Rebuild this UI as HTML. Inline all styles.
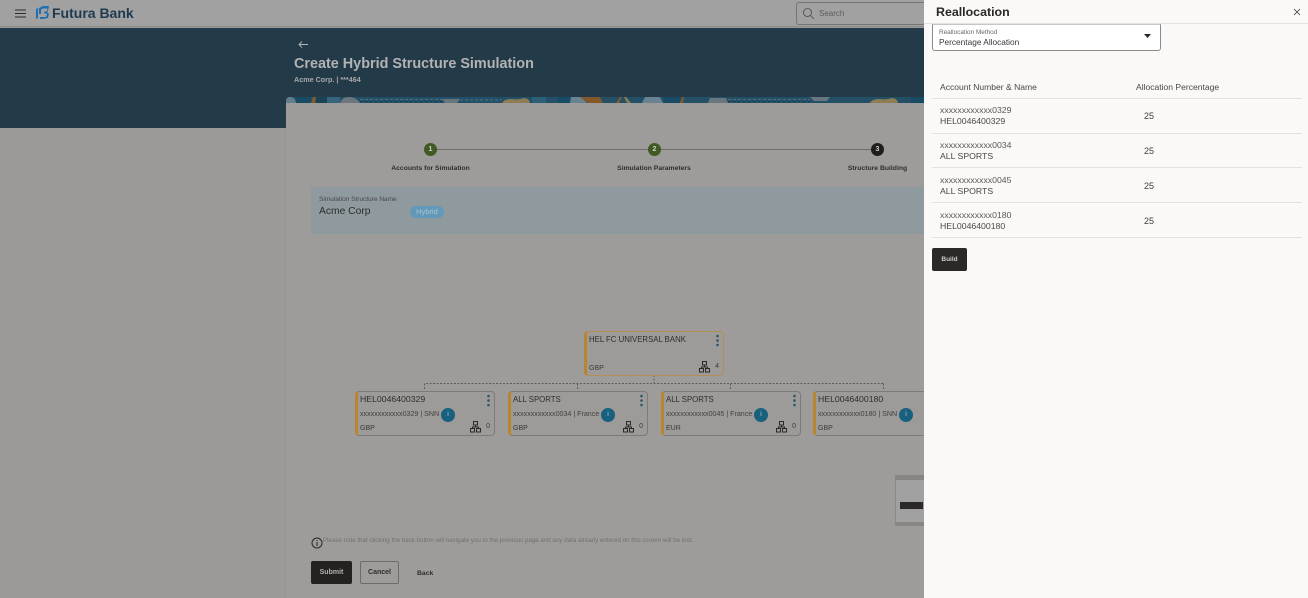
<!DOCTYPE html>
<html lang="en">
<head>
<meta charset="utf-8">
<title>Create Hybrid Structure Simulation</title>
<style>
html,body{margin:0;padding:0}
body{width:1308px;height:598px;overflow:hidden;position:relative;background:#9c9a98;font-family:"Liberation Sans",sans-serif;color:#2a2826}
.a{position:absolute;white-space:nowrap}
.box{position:absolute;box-sizing:border-box}
.step{position:absolute;width:13px;height:13px;border-radius:50%;color:#cfcfc8;font-size:7px;font-weight:bold;line-height:13px;text-align:center}
.lab{position:absolute;top:164px;font-size:6.8px;line-height:10px;font-weight:bold;color:#2f2e2c;white-space:nowrap;transform:translateX(-50%)}
.card{position:absolute;box-sizing:border-box;height:45px;width:140px;border:1px solid #7d7b79;border-left:3px solid #b9852f;border-radius:4px;background:#9d9b99}
.card .t{position:absolute;left:2px;top:1px;font-size:8.7px;line-height:13px;color:#2f2e2d;white-space:nowrap}
.card .t.w{font-size:7.8px}
.card .s{position:absolute;left:2px;top:17px;font-size:7.1px;line-height:11px;color:#444240;white-space:nowrap}
.card .c{position:absolute;left:2px;top:31px;font-size:7px;line-height:11px;color:#3c3a39}
.card .i{position:absolute;top:16px;width:14px;height:14px;border-radius:50%;background:#19607f;color:#b9c5cb;font-size:7px;line-height:14px;text-align:center}
.card .n{position:absolute;right:4px;top:30px;font-size:7px;line-height:10px;color:#3c3a39}
.card svg.org{position:absolute;right:13px;top:29px}
.card svg.dots{position:absolute;right:3px;top:2px}
.row{position:absolute;left:932px;width:370px;box-sizing:border-box;border-bottom:1px solid #e3e2df}
.row .num{position:absolute;left:8px;top:6px;font-size:8.7px;line-height:11px;color:#5a5857}
.row .nm{position:absolute;left:8px;top:17px;font-size:8.7px;line-height:11px;color:#4a4846}
.row .p{position:absolute;left:212px;top:11px;font-size:9px;line-height:12px;color:#3f3d3b}
.row.d .num{top:7px}.row.d .nm{top:18px}.row.d .p{top:12px}
</style>
</head>
<body>
<!-- top bar -->
<div class="box" style="left:0;top:0;width:924px;height:27px;background:#a1a1a1;border-bottom:1px solid #8a8a8a"></div>
<svg class="a" style="left:15px;top:9px" width="11" height="9" viewBox="0 0 11 9"><path d="M0 1h11M0 4.5h11M0 8h11" stroke="#2b2b2b" stroke-width="1.1"/></svg>
<svg class="a" style="left:35px;top:5px" width="15" height="15" viewBox="0 0 15 15"><path d="M1 4 3 3v10l-2 1z" fill="#1f6fb0"/><path d="M4 3 8 1h6l-1 5-1 1 2 2-1 4-5 1H5v-2h6l1-3-3-1v-1l3-1 .5-2.500H8L6 4.500V9H4z" fill="#1f6fb0"/></svg>
<div class="a" style="left:52px;top:4px;font-size:14px;line-height:18px;font-weight:bold;color:#1f3a50">Futura Bank</div>
<div class="box" style="left:796px;top:2px;width:140px;height:23px;border:1px solid #757575;border-radius:3px;background:#a1a1a1"></div>
<svg class="a" style="left:802px;top:7px" width="13" height="13" viewBox="0 0 13 13"><circle cx="5.500" cy="5.500" r="4" fill="none" stroke="#4a4a4a" stroke-width=".8"/><path d="M8.500 8.500 12 12" stroke="#4a4a4a" stroke-width=".8"/></svg>
<div class="a" style="left:819px;top:8px;font-size:8px;line-height:11px;color:#5c5c5c">Search</div>

<!-- blue header -->
<div class="box" style="left:0;top:28px;width:924px;height:100px;background:#233a49"></div>
<svg class="a" style="left:298px;top:40px" width="11" height="9" viewBox="0 0 11 9"><path d="M10 4.500H1M4 1.500 1 4.500l3 3" fill="none" stroke="#b5b5b5" stroke-width=".9"/></svg>
<div class="a" style="left:294px;top:55px;font-size:14.4px;line-height:18px;font-weight:bold;color:#b3b3b3">Create Hybrid Structure Simulation</div>
<div class="a" style="left:294px;top:75px;font-size:7.2px;line-height:10px;font-weight:bold;color:#a9a9a9">Acme Corp. | ***464</div>

<!-- pattern strip -->
<svg class="a" style="left:286px;top:97px;opacity:.8" width="638" height="6" viewBox="0 0 638 6">
<path d="M0 6V4Q0 0 4 0H638V6z" fill="#24566e"/>
<path d="M0 6V4Q0 0 4 0q5 0 6 6z" fill="#76909f"/>
<rect x="10" width="15" height="6" fill="#15506b"/>
<path d="M25 6 27 0h3l-1 6z" fill="#9c6122"/>
<rect x="30" width="11" height="6" fill="#1a4459"/>
<rect x="41" width="13" height="6" fill="#3d7189"/>
<path d="M54 6q2-6 9-6t11 6z" fill="#7e868d"/>
<path d="M74 2.500h82" stroke="#5d7f8f" stroke-width="1" stroke-dasharray="3 2"/>
<path d="M74 4.500h82" stroke="#173d50" stroke-width="1" stroke-dasharray="2 3"/>
<path d="M156 2h18l-3 4h-12z" fill="#7a858d"/>
<path d="M174 3h42" stroke="#5d7f8f" stroke-width="1" stroke-dasharray="3 2"/>
<path d="M216 6q2-4 9-4 8 1 13-1 5 0 6 5z" fill="#a98d57"/>
<rect x="246" width="14" height="6" fill="#2f6a84"/>
<rect x="272" width="12" height="6" fill="#15506b"/>
<path d="M284 6l1-6h10l6 6z" fill="#7a95a5"/>
<path d="M294 0h20l3 6h-15z" fill="#9c6122"/>
<path d="M330 6l4-6h2l-3 6z" fill="#9c6122"/>
<path d="M338 0h2l5 6h-4z" fill="#a98d57"/>
<path d="M356 6l3-6h15l3 6z" fill="#7a95a5"/>
<rect x="378" width="16" height="6" fill="#15506b"/>
<path d="M394 6l2-6h2l-1 6z" fill="#9c6122"/>
<path d="M422 6l2-5h16l2 5z" fill="#7e868d"/>
<path d="M442 2.500h82" stroke="#5d7f8f" stroke-width="1" stroke-dasharray="3 2"/>
<path d="M442 4.500h82" stroke="#173d50" stroke-width="1" stroke-dasharray="2 3"/>
<path d="M524 0h20l-3 4h-13z" fill="#7a858d"/>
<path d="M584 6q2-4 9-4 8 1 13-1 5 0 6 5z" fill="#a98d57"/>
<rect x="625" width="13" height="6" fill="#15506b"/>
</svg>

<!-- main card -->
<div class="box" style="left:286px;top:103px;width:638px;height:495px;background:#9e9c9a"></div>
<div class="box" style="left:285px;top:128px;width:1px;height:470px;background:#96948f"></div>

<!-- stepper -->
<div class="box" style="left:430px;top:149px;width:448px;height:1px;background:#6e6c6a"></div>
<div class="step" style="left:424px;top:143px;background:#3f5a22">1</div>
<div class="step" style="left:648px;top:143px;background:#3f5a22">2</div>
<div class="step" style="left:871px;top:143px;background:#1f1e1d">3</div>
<div class="lab" style="left:430.500px">Accounts for Simulation</div>
<div class="lab" style="left:654px">Simulation Parameters</div>
<div class="lab" style="left:877.500px">Structure Building</div>

<!-- structure name -->
<div class="box" style="left:311px;top:187px;width:613px;height:47px;background:#8f9a9e"></div>
<div class="a" style="left:319px;top:195px;font-size:6.5px;line-height:10px;color:#47494a">Simulation Structure Name</div>
<div class="a" style="left:319px;top:205px;font-size:10.3px;line-height:14px;color:#2c2d2d">Acme Corp</div>
<div class="box" style="left:410px;top:206px;width:34px;height:12px;border-radius:6px;background:#6399b8;color:#a9c2d0;font-size:7.5px;line-height:12px;text-align:center">Hybrid</div>

<!-- connectors -->
<svg class="a" style="left:350px;top:370px" width="574" height="25" viewBox="0 0 574 25" fill="none" stroke="#5f5e5c" stroke-width="1" stroke-dasharray="2 1.500">
<path d="M304 5V13"/>
<path d="M74.500 19V13.500H533"/>
<path d="M227.500 13.500V19M380.500 13.500V19M533.500 13.500V19"/>
</svg>

<!-- root card -->
<div class="card" style="left:584px;top:331px;border-color:#b18f55;border-left-color:#b9852f">
 <div class="t w">HEL FC UNIVERSAL BANK</div>
 <div class="c">GBP</div>
 <svg class="dots" width="5" height="13" viewBox="0 0 5 13" fill="#2a566c"><circle cx="2.500" cy="2" r="1.300"/><circle cx="2.500" cy="6.500" r="1.300"/><circle cx="2.500" cy="11" r="1.300"/></svg>
 <svg class="org" width="11" height="12" viewBox="0 0 11 12" fill="none" stroke="#2a2928" stroke-width="1"><rect x="3.500" y=".5" width="4" height="3.500"/><rect x=".5" y="7.500" width="4" height="3.500"/><rect x="6.500" y="7.500" width="4" height="3.500"/><path d="M5.500 4v2H2.500v1.500M5.500 6h3v1.500"/></svg>
 <div class="n">4</div>
</div>

<!-- child cards -->
<div class="card" style="left:355px;top:391px">
 <div class="t">HEL0046400329</div>
 <div class="s">xxxxxxxxxxxx0329 | SNN</div>
 <div class="i" style="left:83px">i</div>
 <div class="c">GBP</div>
 <svg class="dots" width="5" height="13" viewBox="0 0 5 13" fill="#2a566c"><circle cx="2.500" cy="2" r="1.300"/><circle cx="2.500" cy="6.500" r="1.300"/><circle cx="2.500" cy="11" r="1.300"/></svg>
 <svg class="org" width="11" height="12" viewBox="0 0 11 12" fill="none" stroke="#2a2928" stroke-width="1"><rect x="3.500" y=".5" width="4" height="3.500"/><rect x=".5" y="7.500" width="4" height="3.500"/><rect x="6.500" y="7.500" width="4" height="3.500"/><path d="M5.500 4v2H2.500v1.500M5.500 6h3v1.500"/></svg>
 <div class="n">0</div>
</div>
<div class="card" style="left:508px;top:391px">
 <div class="t w">ALL SPORTS</div>
 <div class="s">xxxxxxxxxxxx0034 | France</div>
 <div class="i" style="left:90px">i</div>
 <div class="c">GBP</div>
 <svg class="dots" width="5" height="13" viewBox="0 0 5 13" fill="#2a566c"><circle cx="2.500" cy="2" r="1.300"/><circle cx="2.500" cy="6.500" r="1.300"/><circle cx="2.500" cy="11" r="1.300"/></svg>
 <svg class="org" width="11" height="12" viewBox="0 0 11 12" fill="none" stroke="#2a2928" stroke-width="1"><rect x="3.500" y=".5" width="4" height="3.500"/><rect x=".5" y="7.500" width="4" height="3.500"/><rect x="6.500" y="7.500" width="4" height="3.500"/><path d="M5.500 4v2H2.500v1.500M5.500 6h3v1.500"/></svg>
 <div class="n">0</div>
</div>
<div class="card" style="left:661px;top:391px">
 <div class="t w">ALL SPORTS</div>
 <div class="s">xxxxxxxxxxxx0045 | France</div>
 <div class="i" style="left:90px">i</div>
 <div class="c">EUR</div>
 <svg class="dots" width="5" height="13" viewBox="0 0 5 13" fill="#2a566c"><circle cx="2.500" cy="2" r="1.300"/><circle cx="2.500" cy="6.500" r="1.300"/><circle cx="2.500" cy="11" r="1.300"/></svg>
 <svg class="org" width="11" height="12" viewBox="0 0 11 12" fill="none" stroke="#2a2928" stroke-width="1"><rect x="3.500" y=".5" width="4" height="3.500"/><rect x=".5" y="7.500" width="4" height="3.500"/><rect x="6.500" y="7.500" width="4" height="3.500"/><path d="M5.500 4v2H2.500v1.500M5.500 6h3v1.500"/></svg>
 <div class="n">0</div>
</div>
<div class="card" style="left:813px;top:391px">
 <div class="t">HEL0046400180</div>
 <div class="s">xxxxxxxxxxxx0180 | SNN</div>
 <div class="i" style="left:83px">i</div>
 <div class="c">GBP</div>
</div>

<!-- zoom control -->
<div class="box" style="left:895px;top:475px;width:29px;height:51px;background:#a1a1a1;border-left:1px solid #8a8a88"></div>
<div class="box" style="left:895px;top:475px;width:29px;height:5px;background:#878684"></div>
<div class="box" style="left:895px;top:522px;width:29px;height:4px;background:#878684"></div>
<div class="box" style="left:900px;top:502px;width:23px;height:7px;background:#2a2928"></div>

<!-- footer -->
<svg class="a" style="left:311px;top:537px" width="12" height="12" viewBox="0 0 12 12" fill="none" stroke="#2a2928"><circle cx="6" cy="6" r="5"/><path d="M6 5v4M6 3v1"/></svg>
<div class="a" style="left:323px;top:536px;font-size:6.2px;line-height:10px;color:#73716f">Please note that clicking the back button will navigate you to the previous page and any data already entered on this screen will be lost.</div>
<div class="box" style="left:311px;top:561px;width:41px;height:23px;border-radius:2px;background:#24211f;color:#b5b3b1;font-size:7px;font-weight:bold;line-height:24px;text-align:center">Submit</div>
<div class="box" style="left:360px;top:561px;width:39px;height:23px;border-radius:2px;border:1px solid #6e6c6a;color:#2f2e2c;font-size:7px;font-weight:bold;line-height:22px;text-align:center">Cancel</div>
<div class="a" style="left:417px;top:568px;font-size:6.8px;font-weight:bold;line-height:11px;color:#2f2e2c">Back</div>

<!-- side panel -->
<div class="box" style="left:924px;top:0;width:384px;height:598px;background:#faf9f7"></div>
<div class="box" style="left:924px;top:23px;width:384px;height:1px;background:#e3e2df"></div>
<div class="a" style="left:936px;top:4px;font-size:12.4px;line-height:17px;font-weight:bold;color:#2a2826">Reallocation</div>
<svg class="a" style="left:1293px;top:8px" width="8" height="8" viewBox="0 0 8 8"><path d="M1 1l6 6M7 1 1 7" stroke="#3a3836" stroke-width=".8"/></svg>

<div class="box" style="left:932px;top:24px;width:229px;height:27px;background:#fff;border:1px solid #8c8a88;border-top-color:#c8c6c4;border-radius:0 0 3px 3px"></div>
<div class="a" style="left:939px;top:28px;font-size:6.4px;line-height:9px;color:#6a6866">Reallocation Method</div>
<div class="a" style="left:939px;top:36px;font-size:8.3px;line-height:12px;color:#3a3836">Percentage Allocation</div>
<svg class="a" style="left:1144px;top:34px" width="7" height="4" viewBox="0 0 7 4"><path d="M0 0h7L3.500 4z" fill="#2a2826"/></svg>

<div class="a" style="left:940px;top:81px;font-size:8.55px;line-height:12px;color:#4a4846">Account Number &amp; Name</div>
<div class="a" style="left:1136px;top:81px;font-size:8.55px;line-height:12px;color:#4a4846">Allocation Percentage</div>
<div class="box" style="left:932px;top:98px;width:370px;height:1px;background:#e3e2df"></div>

<div class="row" style="top:99px;height:35px"><div class="num">xxxxxxxxxxxx0329</div><div class="nm">HEL0046400329</div><div class="p">25</div></div>
<div class="row" style="top:134px;height:34px"><div class="num">xxxxxxxxxxxx0034</div><div class="nm">ALL SPORTS</div><div class="p">25</div></div>
<div class="row d" style="top:168px;height:35px"><div class="num">xxxxxxxxxxxx0045</div><div class="nm">ALL SPORTS</div><div class="p">25</div></div>
<div class="row d" style="top:203px;height:35px"><div class="num">xxxxxxxxxxxx0180</div><div class="nm">HEL0046400180</div><div class="p">25</div></div>

<div class="box" style="left:932px;top:248px;width:35px;height:23px;border-radius:2px;background:#2b2826;color:#cfcdcb;font-size:6.5px;font-weight:bold;line-height:23px;text-align:center">Build</div>
</body>
</html>
